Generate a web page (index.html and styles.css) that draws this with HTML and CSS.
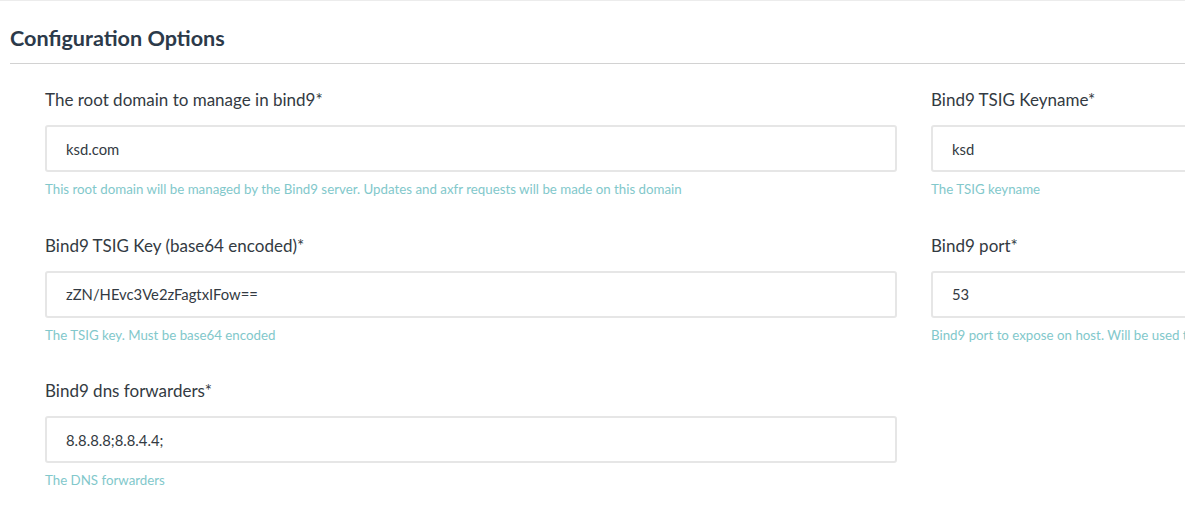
FILE: index.html
```html
<!DOCTYPE html>
<html lang="en">
<head>
<meta charset="utf-8">
<title>Configuration Options</title>
<link rel="stylesheet" href="styles.css">
</head>
<body>
<div class="page">
  <h2 class="title">Configuration Options</h2>
  <hr class="rule">
  <form class="form-grid">
    <div class="field">
      <label class="label">The root domain to manage in bind9*</label>
      <div class="input">ksd.com</div>
      <div class="help">This root domain will be managed by the Bind9 server. Updates and axfr requests will be made on this domain</div>
    </div>
    <div class="field">
      <label class="label">Bind9 TSIG Keyname*</label>
      <div class="input">ksd</div>
      <div class="help">The TSIG keyname</div>
    </div>
    <div class="field">
      <label class="label">Bind9 TSIG Key (base64 encoded)*</label>
      <div class="input">zZN/HEvc3Ve2zFagtxIFow==</div>
      <div class="help">The TSIG key. Must be base64 encoded</div>
    </div>
    <div class="field">
      <label class="label">Bind9 port*</label>
      <div class="input">53</div>
      <div class="help">Bind9 port to expose on host. Will be used to reach the DNS server</div>
    </div>
    <div class="field">
      <label class="label">Bind9 dns forwarders*</label>
      <div class="input">8.8.8.8;8.8.4.4;</div>
      <div class="help">The DNS forwarders</div>
    </div>
  </form>
</div>
</body>
</html>
```

FILE: styles.css
```css
html, body {
  margin: 0;
  padding: 0;
  background: #ffffff;
  overflow: hidden;
}

body {
  font-family: Lato, "Liberation Sans", sans-serif;
  border-top: 1px solid #ececec;
  width: 1185px;
  height: 513px;
}

.page {
  padding: 0 0 0 10px;
}

.title {
  margin: 24px 0 0 0;
  font-size: 21.6px;
  line-height: 26px;
  font-weight: 700;
  color: #2c3a4a;
}

.rule {
  margin: 12px 0 0 0;
  border: 0;
  border-top: 1px solid #d2d2d2;
  height: 0;
}

.form-grid {
  display: grid;
  grid-template-columns: 852px 852px;
  column-gap: 34px;
  row-gap: 35.5px;
  padding: 24px 0 0 35px;
  margin: 0;
}

.field {
  display: flex;
  flex-direction: column;
}

.label {
  font-size: 17px;
  line-height: 24px;
  color: #333a42;
}

.input {
  margin-top: 13px;
  height: 43px;
  border: 2px solid #e6e6e6;
  border-radius: 3px;
  padding: 0 19px;
  display: flex;
  align-items: center;
  font-size: 14.8px;
  color: #333a42;
  background: #ffffff;
}

.help {
  margin-top: 8px;
  font-size: 13.3px;
  line-height: 18px;
  color: #82c8cb;
  white-space: nowrap;
}
```
